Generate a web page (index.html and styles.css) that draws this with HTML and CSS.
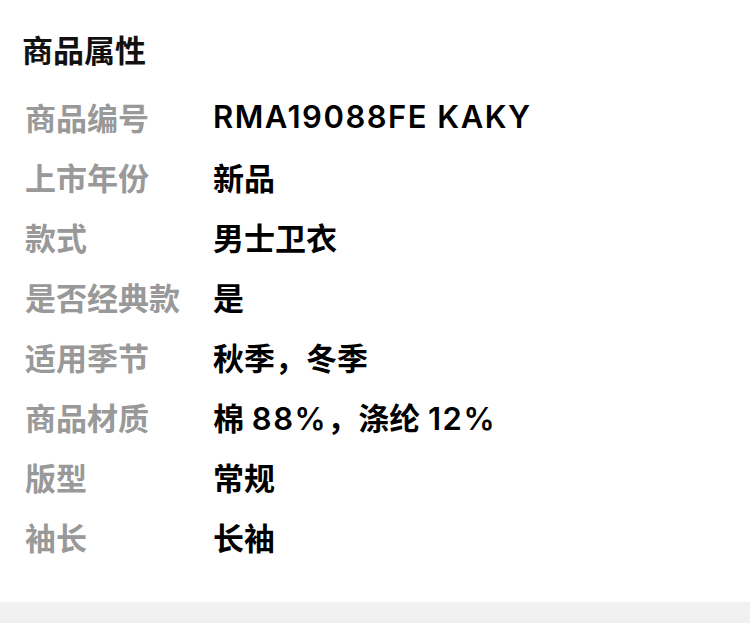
FILE: index.html
```html
<!DOCTYPE html>
<html lang="zh">
<head>
<meta charset="utf-8">
<link rel="stylesheet" href="styles.css">
</head>
<body>
<section class="attrs">
  <h2 class="title">商品属性</h2>
  <dl class="list">
    <div class="row"><dt>商品编号</dt><dd><span class="lat">RMA19088FE KAKY</span></dd></div>
    <div class="row"><dt>上市年份</dt><dd>新品</dd></div>
    <div class="row"><dt>款式</dt><dd>男士卫衣</dd></div>
    <div class="row"><dt>是否经典款</dt><dd>是</dd></div>
    <div class="row"><dt>适用季节</dt><dd>秋季，冬季</dd></div>
    <div class="row"><dt>商品材质</dt><dd>棉 <span class="lat">88%</span>，涤纶 <span class="lat">12%</span></dd></div>
    <div class="row"><dt>版型</dt><dd>常规</dd></div>
    <div class="row"><dt>袖长</dt><dd>长袖</dd></div>
  </dl>
</section>
<div class="band"></div>
</body>
</html>
```
FILE: styles.css
```css
html, body {
  margin: 0;
  padding: 0;
  background: #fff;
}
body {
  width: 750px;
  height: 628px;
  overflow: hidden;
  font-family: Inter, "Noto Sans CJK SC", sans-serif;
}
.attrs {
  padding: 21px 0 0 0;
  height: 581px;
  box-sizing: border-box;
}
.title {
  margin: 0;
  padding-left: 22px;
  font-size: 31px;
  line-height: 60px;
  font-weight: 700;
  color: #111;
}
.list {
  margin: 5px 0 0 0;
  padding: 0;
}
.row {
  display: flex;
  align-items: center;
  height: 60px;
}
.row dt {
  width: 188px;
  padding-left: 25px;
  font-size: 31px;
  font-weight: 700;
  color: #999;
}
.row dd {
  margin: 0;
  font-size: 31px;
  font-weight: 600;
  color: #000;
}
.lat {
  letter-spacing: 1.5px;
}
.band {
  margin-top: 21px;
  height: 21px;
  background: #f1f1f1;
}
```
